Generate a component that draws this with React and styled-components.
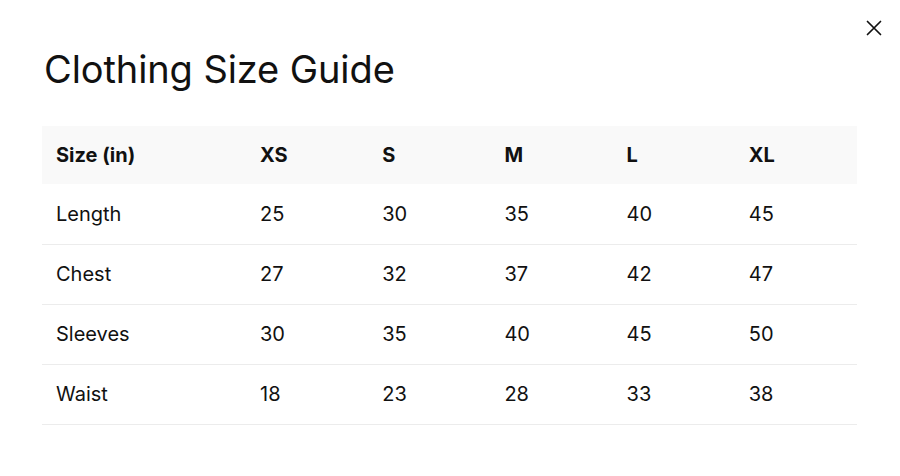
import React from "react";
import styled, { createGlobalStyle } from "styled-components";

const GlobalStyle = createGlobalStyle`
  body {
    margin: 0;
    background: #ffffff;
    font-family: Inter, "Liberation Sans", sans-serif;
    color: #111111;
  }
`;

const Dialog = styled.div`
  position: relative;
  width: 900px;
  height: 476px;
  box-sizing: border-box;
  padding: 45px 43px 0 42px;
  background: #ffffff;
`;

const CloseButton = styled.button`
  position: absolute;
  top: 16px;
  right: 14px;
  width: 24px;
  height: 24px;
  padding: 0;
  border: none;
  background: transparent;
  display: flex;
  align-items: center;
  justify-content: center;
  cursor: pointer;
  color: #111111;
`;

const Title = styled.h2`
  margin: 0 0 33px 2px;
  font-size: 38px;
  line-height: 48px;
  font-weight: 400;
  letter-spacing: -0.1px;
`;

const Table = styled.table`
  width: 815px;
  border-collapse: collapse;
  table-layout: fixed;
`;

const HeadRow = styled.tr`
  background: #f9f9f9;
  height: 58px;
`;

const Row = styled.tr`
  height: 60px;
  border-bottom: 1px solid #ececec;
`;

const Cell = styled.td`
  padding: 0 14px;
  font-size: 20px;
  font-weight: ${(p) => (p.$head ? 700 : 400)};
  text-align: left;
  white-space: nowrap;
`;

const sizes = ["XS", "S", "M", "L", "XL"];

const rows = [
  ["Length", 25, 30, 35, 40, 45],
  ["Chest", 27, 32, 37, 42, 47],
  ["Sleeves", 30, 35, 40, 45, 50],
  ["Waist", 18, 23, 28, 33, 38],
];

export default function App() {
  return (
    <>
      <GlobalStyle />
      <Dialog>
        <CloseButton aria-label="Close">
          <svg width="18" height="18" viewBox="0 0 18 18" fill="none" stroke="currentColor" strokeWidth="1.7" strokeLinecap="round">
            <path d="M2.5 2.5l13 13M15.5 2.5l-13 13" />
          </svg>
        </CloseButton>
        <Title>Clothing Size Guide</Title>
        <Table>
          <colgroup>
            <col style={{ width: 204 }} />
            {sizes.map((s) => (
              <col key={s} />
            ))}
          </colgroup>
          <thead>
            <HeadRow>
              <Cell as="th" $head>Size (in)</Cell>
              {sizes.map((s) => (
                <Cell as="th" $head key={s}>{s}</Cell>
              ))}
            </HeadRow>
          </thead>
          <tbody>
            {rows.map((r) => (
              <Row key={r[0]}>
                {r.map((v, i) => (
                  <Cell key={i}>{v}</Cell>
                ))}
              </Row>
            ))}
          </tbody>
        </Table>
      </Dialog>
    </>
  );
}
